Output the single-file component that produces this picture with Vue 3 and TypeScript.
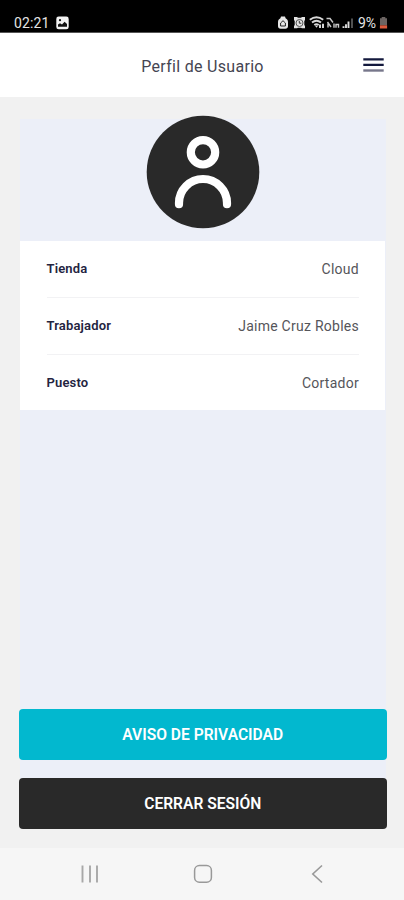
<script setup lang="ts">
interface ProfileField {
  label: string
  value: string
}

const fields: ProfileField[] = [
  { label: 'Tienda', value: 'Cloud' },
  { label: 'Trabajador', value: 'Jaime Cruz Robles' },
  { label: 'Puesto', value: 'Cortador' },
]
</script>

<template>
  <div class="screen">
    <div class="status">
      <span class="clock">02:21</span>
      <svg class="photo" width="13" height="14" viewBox="0 0 13 14">
        <rect x="0.3" y="0.5" width="12.4" height="12.8" rx="2.4" fill="#f2f2f2" />
        <circle cx="4" cy="4.2" r="1.1" fill="#111" />
        <path d="M2 10.8V8.6l2-1.4 2 1.2 2.6-2.6L11 8v2.8z" fill="#111" />
      </svg>
      <svg class="indicators" width="78" height="16" viewBox="0 0 78 16">
        <path d="M3 1.5h4l.6 1.8c1.5.8 2.4 2 2.4 3.7v4c0 1.8-1 2.8-2.6 2.8H2.6C1 13.8 0 12.8 0 11V7c0-1.7.9-2.9 2.4-3.7z" fill="#e6e6e6" />
        <path d="M2.6 8L5 5.7 7.4 8v3H2.6z" fill="none" stroke="#222" stroke-width="1" />
        <path d="M16 2h3l1 .8h3l1-.8h3v3l-.7 1v4l.7 1v2.3h-3l-1-.5h-3l-1 .5h-3V11l.7-1V6L16 5z" fill="#e2e2e2" />
        <circle cx="21.5" cy="8" r="3.5" fill="none" stroke="#555" stroke-width="1" />
        <path d="M21.3 5.8v2.4h2" fill="none" stroke="#333" stroke-width="1" />
        <g fill="none" stroke="#d8d8d8" stroke-width="1.9">
          <path d="M31.8 4.8Q38.5 -.2 45.2 4.8" />
          <path d="M34 7.5Q38.5 4 43 7.5" />
          <path d="M36.3 10Q38.5 8.4 40.7 10" />
        </g>
        <path d="M37 10.7h3L38.5 12.8z" fill="#ddd" />
        <path d="M42 13V9.5M45 8.8v4.2" stroke="#eee" stroke-width="1.8" />
        <g fill="none" stroke="#c8c8c8" stroke-width="1.4">
          <path d="M48.5 3.5h4M49.5 7l3.5 5M52 3.5l3 4M50 12.5V8.5M56 12.7V8.5M58 12.7V9.5h2.500v3.2" />
        </g>
        <path d="M65.5 13v-1.8M68 13v-3.7M70.5 13V6.5" stroke="#ddd" stroke-width="1.9" />
        <path d="M74 13V3.5" stroke="#666" stroke-width="1.6" />
      </svg>
      <span class="percent">9%</span>
      <svg class="battery" width="9" height="14" viewBox="0 0 9 14">
        <path d="M2.7 1h3.6v1.3H8v7H1v-7h1.7z" fill="#6b6462" />
        <path d="M.9 9.3h7.2v3.2H.9z" fill="#dc5b3d" />
      </svg>
    </div>

    <header class="bar">
      <h1 class="title">Perfil de Usuario</h1>
      <button class="menu" aria-label="Menú">
        <svg width="21" height="16" viewBox="0 0 21 16">
          <path d="M.3 2.4h20.400M.3 7.900h20.400" stroke="#13193d" stroke-width="2.100" />
          <path d="M.3 13.500h20.400" stroke="#77778b" stroke-width="2.400" />
        </svg>
      </button>
    </header>

    <main class="content">
      <section class="panel">
        <div class="hero">
          <svg width="114" height="114" viewBox="0 0 114 114">
            <circle cx="57" cy="57" r="56.3" fill="#292929" />
            <g fill="none" stroke="#fff" stroke-width="8.2" stroke-linecap="round">
              <circle cx="57" cy="37.3" r="12.2" />
              <path d="M33 89.2V88a24 24 0 0 1 48 0v1.2" />
            </g>
          </svg>
        </div>
        <dl class="card">
          <div v-for="field in fields" :key="field.label" class="row">
            <dt>{{ field.label }}</dt>
            <dd>{{ field.value }}</dd>
          </div>
        </dl>
        <div class="actions">
          <button class="action privacy">AVISO DE PRIVACIDAD</button>
          <button class="action logout">CERRAR SESIÓN</button>
        </div>
      </section>
    </main>

    <nav class="nav">
      <svg width="20" height="20" viewBox="0 0 20 20">
        <path d="M2.5 1.5v17M10 1.5v17M17 1.5v17" stroke="#a8a8a8" stroke-width="1.9" />
      </svg>
      <svg width="20" height="20" viewBox="0 0 20 20">
        <rect x="1.6" y="1.6" width="16.8" height="16.6" rx="4.8" fill="none" stroke="#999" stroke-width="1.5" />
      </svg>
      <svg width="20" height="20" viewBox="0 0 20 20">
        <path d="M15 1.5L5.8 10l9.2 8.5" fill="none" stroke="#999" stroke-width="1.6" />
      </svg>
    </nav>
  </div>
</template>

<style>
body {
  background: #f1f1f1;
}
</style>

<style scoped>
.screen {
  width: 404px;
  height: 900px;
  display: flex;
  flex-direction: column;
  overflow: hidden;
  background: #f1f1f1;
  font-family: Roboto, "Liberation Sans", sans-serif;
}

button {
  border: 0;
  padding: 0;
  font-family: inherit;
}

.status {
  box-sizing: border-box;
  height: 33px;
  flex: none;
  display: flex;
  align-items: center;
  padding: 14px 15px 0 14px;
  background: #000;
  color: #e4e4e4;
  border-bottom: 1px solid #555;
}

.clock {
  width: 42px;
  font-size: 14px;
  letter-spacing: 0.1px;
}

.indicators {
  margin-left: 209px;
}

.percent {
  width: 20px;
  margin-left: 2px;
  font-size: 14px;
  letter-spacing: -0.1px;
}

.battery {
  margin-left: 1px;
}

.bar {
  height: 64px;
  flex: none;
  display: grid;
  grid-template-columns: 1fr auto 1fr;
  align-items: center;
  background: #fff;
}

.title {
  grid-column: 2;
  margin: 0;
  padding: 3px 0 0 1px;
  font-size: 16px;
  line-height: 20px;
  font-weight: 400;
  letter-spacing: 0.3px;
  color: #454552;
}

.menu {
  justify-self: end;
  width: 21px;
  margin-right: 20px;
  display: flex;
  background: none;
}

.content {
  flex: 1;
  padding: 22px 18px 20px 20px;
  display: flex;
}

.panel {
  flex: 1;
  display: flex;
  flex-direction: column;
  background: #eceff8;
}

.hero {
  height: 122px;
  display: flex;
  justify-content: center;
}

.hero svg {
  margin-top: -4px;
}

.card {
  width: 365px;
  height: 169px;
  box-sizing: border-box;
  margin: 0;
  padding: 0 26px 0 26.5px;
  background: #fff;
}

.row {
  height: 56px;
  display: flex;
  align-items: center;
  justify-content: space-between;
}

.row + .row {
  border-top: 1px solid #f2f2f4;
}

dt {
  margin-top: -1px;
  font-size: 13px;
  font-weight: 600;
  letter-spacing: 0.16px;
  color: #24243f;
}

dd {
  margin: 0;
  font-size: 14px;
  letter-spacing: 0.26px;
  color: #55555a;
}

.actions {
  margin: auto -1px -1px -1.5px;
  display: flex;
  flex-direction: column;
  gap: 18px;
}

.action {
  height: 51px;
  border-radius: 4px;
  color: #fff;
  font-size: 15.6px;
  font-weight: 600;
}

.privacy {
  background: #02b8cf;
}

.logout {
  background: #292929;
}

.nav {
  height: 52px;
  flex: none;
  box-sizing: border-box;
  padding-left: 2px;
  display: flex;
  align-items: center;
  justify-content: center;
  gap: 93.5px;
  background: #f6f6f6;
}
</style>
